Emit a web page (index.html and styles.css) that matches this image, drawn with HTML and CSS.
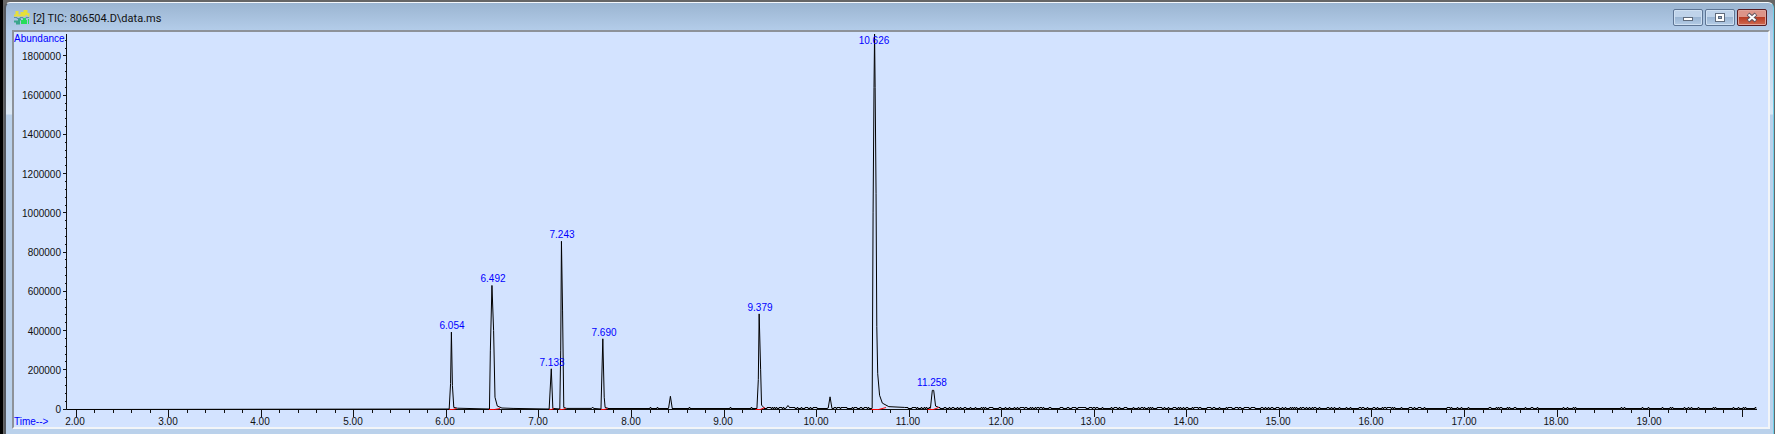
FILE: index.html
```html
<!DOCTYPE html>
<html lang="en">
  <head>
    <meta charset="utf-8" />
    <title>[2] TIC: 806504.D\data.ms</title>
    <link rel="stylesheet" href="styles.css">
  </head>

  <body>
    <div class="window">
      <header class="titlebar">
        <svg class="app-icon" width="16" height="16" viewBox="0 0 16 16">
          <path d="M0 5.5h2.5V2h1v3.5h4V3h1v2.5h2V0h2v4h2v1.5h1" fill="none" stroke="#e6e03a" stroke-width="2" />
          <path d="M0 7.5h3v1h3v-1h3v1h3v-1h3" fill="none" stroke="#5d8fae" stroke-width="1" />
          <path d="M0 11.5h3v2h2v-4h2" fill="none" stroke="#3aa58c" stroke-width="2" />
          <path d="M7 14V10h2V8h3v2h1v4zM14 9h1v5h-1z" fill="#27dd5a" />
        </svg>
        <h1>[2] TIC: 806504.D\data.ms</h1>
        <div class="controls">
          <button type="button" aria-label="Minimize">
            <svg width="12" height="12" viewBox="0 0 12 12">
              <rect x="1.5" y="5.5" width="9" height="3" fill="#fff" stroke="#5f6b7c" />
            </svg>
          </button>
          <button type="button" aria-label="Maximize">
            <svg width="12" height="12" viewBox="0 0 12 12">
              <rect x="1.5" y="1.5" width="9" height="8" fill="#fff" stroke="#5f6b7c" />
              <rect x="4.5" y="4.5" width="3" height="2" fill="#8fa9c8" stroke="#5f6b7c" />
            </svg>
          </button>
          <button type="button" class="close" aria-label="Close">
            <svg width="12" height="12" viewBox="0 0 12 12">
              <path d="M2 2l8 7M10 2l-8 7" stroke="#5f5560" stroke-width="4" />
              <path d="M2.5 2.5l7 6M9.5 2.5l-7 6" stroke="#fff" stroke-width="2" />
            </svg>
          </button>
        </div>
      </header>
      <main class="panel">
        <svg id="chart"></svg>
      </main>
    </div>

    <script>
      var NS = "http://www.w3.org/2000/svg";
      var chart = document.getElementById("chart");

      // plot margins inside the panel
      var LEFT = 52, RIGHT = 11, TOP = 2, BOTTOM = 18;
      var T_MIN = 1.89, T_MAX = 20.16, Y_MAX = 1912000;

      // outline of each peak: [time, abundance]
      var peaks = [
        [[6.03, 0], [6.045, 130000], [6.054, 392000], [6.065, 120000], [6.08, 8000], [6.12, 4000]],
        [[6.465, 0], [6.475, 300000], [6.492, 630000], [6.51, 400000], [6.525, 60000], [6.55, 15000], [6.6, 5000], [6.72, 3000]],
        [[7.11, 0], [7.133, 205000], [7.15, 3000]],
        [[7.225, 0], [7.235, 300000], [7.243, 855000], [7.255, 500000], [7.268, 8000], [7.3, 3000]],
        [[7.57, 3000], [7.58, 10000], [7.59, 3000]],
        [[7.67, 0], [7.69, 358000], [7.705, 60000], [7.715, 8000], [7.75, 3000]],
        [[8.4, 3000], [8.42, 65000], [8.44, 3000]],
        [[9.355, 3000], [9.37, 150000], [9.379, 485000], [9.395, 200000], [9.405, 20000], [9.43, 7000]],
        [[9.67, 4000], [9.69, 18000], [9.71, 6000]],
        [[10.125, 5000], [10.145, 62000], [10.165, 5000]],
        [[10.6, 5000], [10.61, 1000000], [10.62, 1640000], [10.626, 1912000], [10.632, 1640000], [10.642, 1100000], [10.65, 420000], [10.66, 180000], [10.68, 70000], [10.71, 30000], [10.78, 12000], [10.95, 8000]],
        [[11.23, 6000], [11.25, 95000], [11.265, 95000], [11.285, 15000], [11.32, 8000]]
      ];
      var labels = [
        [6.054, 392000], [6.492, 630000], [7.133, 205000], [7.243, 855000],
        [7.69, 358000], [9.379, 485000], [10.626, 1912000], [11.258, 100000]
      ];
      var integrated = [
        [6.03, 6.11], [6.46, 6.58], [7.11, 7.16], [7.22, 7.29],
        [7.67, 7.74], [9.34, 9.44], [10.59, 10.75], [11.2, 11.32]
      ];

      function add(name, attrs, text) {
        var el = document.createElementNS(NS, name);
        for (var key in attrs) el.setAttribute(key, attrs[key]);
        if (text) el.textContent = text;
        chart.appendChild(el);
      }

      function draw() {
        var w = chart.clientWidth;
        var h = chart.clientHeight;
        var base = h - BOTTOM;
        function x(t) {
          return LEFT + ((t - T_MIN) / (T_MAX - T_MIN)) * (w - LEFT - RIGHT);
        }
        function y(v) {
          return base - (v / Y_MAX) * (base - TOP);
        }
        function snap(v) {
          return Math.floor(v) + 0.5;
        }
        chart.textContent = "";

        // axes and ticks
        var d = "M" + snap(LEFT) + " " + TOP + "V" + snap(base) + "H" + (w - RIGHT);
        for (var i = 0; i * 40000 < Y_MAX; i++) {
          d += "M" + LEFT + " " + snap(y(i * 40000)) + "h" + (i % 5 ? -1 : -3);
          if (i % 5 === 0) {
            add("text", { x: LEFT - 5, y: Math.round(y(i * 40000)) + 4, class: "num end" }, String(i * 40000));
          }
        }
        for (var k = 10; k <= 100; k++) {
          var t = k / 5;
          d += "M" + snap(x(t)) + " " + base + "v" + (k % 5 ? 4 : 8);
          if (k % 5 === 0 && t < 20) {
            add("text", { x: Math.round(x(t)) - 1, y: base + 16, class: "num middle" }, t.toFixed(2));
          }
        }
        add("path", { d: d, class: "axis" });

        // baseline noise starts after 7.7 min and thins out near the end
        var trace = "M" + snap(LEFT) + " " + snap(base);
        var from = T_MIN;
        var seed = 7;
        function noise(to) {
          for (var s = from; s < to; s += 0.011) {
            if (s < 7.7) continue;
            seed = (seed * 1103 + 12345) % 65536;
            var chance = s < 9.3 ? 0.04 : s < 16.5 ? 0.4 : 0.15;
            trace += "H" + Math.round(x(s)) + "V" + (snap(base) - (seed / 65536 < chance ? 2 : 1));
          }
        }
        peaks.forEach(function (peak) {
          noise(peak[0][0]);
          peak.forEach(function (p) {
            trace += "L" + x(p[0]) + " " + y(p[1]);
          });
          from = peak[peak.length - 1][0];
        });
        noise(T_MAX);
        add("path", { d: trace, class: "trace" });

        integrated.forEach(function (r) {
          var tail = r[0] > 9 ? 8000 : 5000;
          add("path", { d: "M" + x(r[0]) + " " + snap(base) + "H" + x((r[0] + r[1]) / 2) + "L" + x(r[1]) + " " + snap(y(tail)), class: "red" });
        });

        // a label never leaves the top of the plot
        labels.forEach(function (p) {
          var shift = p[0] < 10 ? 1 : -1;
          add("text", { x: Math.round(x(p[0])) + shift, y: Math.max(12, Math.round(y(p[1])) - 3), class: "num middle blue" }, p[0].toFixed(3));
        });
        add("text", { x: 0, y: 10, class: "num blue" }, "Abundance");
        add("text", { x: 0, y: base + 16, class: "num blue" }, "Time-->");
      }

      draw();
      window.addEventListener("resize", draw);
    </script>
  </body>
</html>
```
FILE: styles.css
```css
* {
  box-sizing: border-box;
}
body {
  margin: 0;
  height: 100vh;
  padding: 2px 1px 0 4px;
  background: linear-gradient(to right, #000 3px, #666 3px);
}
.window {
  display: flex;
  flex-direction: column;
  height: 100%;
  padding: 0 3px 5px 6px;
  border-top: 1px solid #f4f8fc;
  border-left: 2px solid #55595f;
  border-right: 1px solid #6fd0ea;
  border-radius: 6px 6px 0 0;
  background: linear-gradient(#9bb5d1, #b4cdea 28px, #dbe8f5 111px, #bad1eb 112px);
}
.titlebar {
  display: flex;
  align-items: center;
  height: 27px;
  padding: 2px 3px 0 2px;
}
.titlebar h1 {
  flex: 1;
  margin: 2px 0 0 3px;
  color: #111;
  font: 11px/16px Roboto, sans-serif;
}
.controls {
  display: flex;
  gap: 2px;
}
.controls button {
  display: flex;
  align-items: center;
  justify-content: center;
  width: 30px;
  height: 17px;
  padding: 0;
  border: 1px solid #5e7594;
  border-radius: 2px;
  background: linear-gradient(#bfd3ea 50%, #9ab5d3 50%, #b4cce6);
  box-shadow: inset 0 0 0 1px #cfe0f2;
}
.controls .close {
  border-color: #5a1c22;
  background: linear-gradient(#dc9488 45%, #b93c24 50%, #d06a50);
  box-shadow: inset 0 0 0 1px #e0a49a;
}
.panel {
  flex: 1;
  min-height: 0;
  border: 2px solid #8d9299;
  border-right-color: #f2f5f8;
  border-bottom-color: #f2f5f8;
  background: #d3e3ff;
}
#chart {
  display: block;
  width: 100%;
  height: 100%;
}
.axis {
  fill: none;
  stroke: #111;
}
.trace {
  fill: none;
  stroke: #000;
}
.red {
  fill: none;
  stroke: #f00;
}
.num {
  fill: #111;
  font: 10px "Liberation Sans", sans-serif;
}
.blue {
  fill: #00f;
}
.middle {
  text-anchor: middle;
}
.end {
  text-anchor: end;
}
```
